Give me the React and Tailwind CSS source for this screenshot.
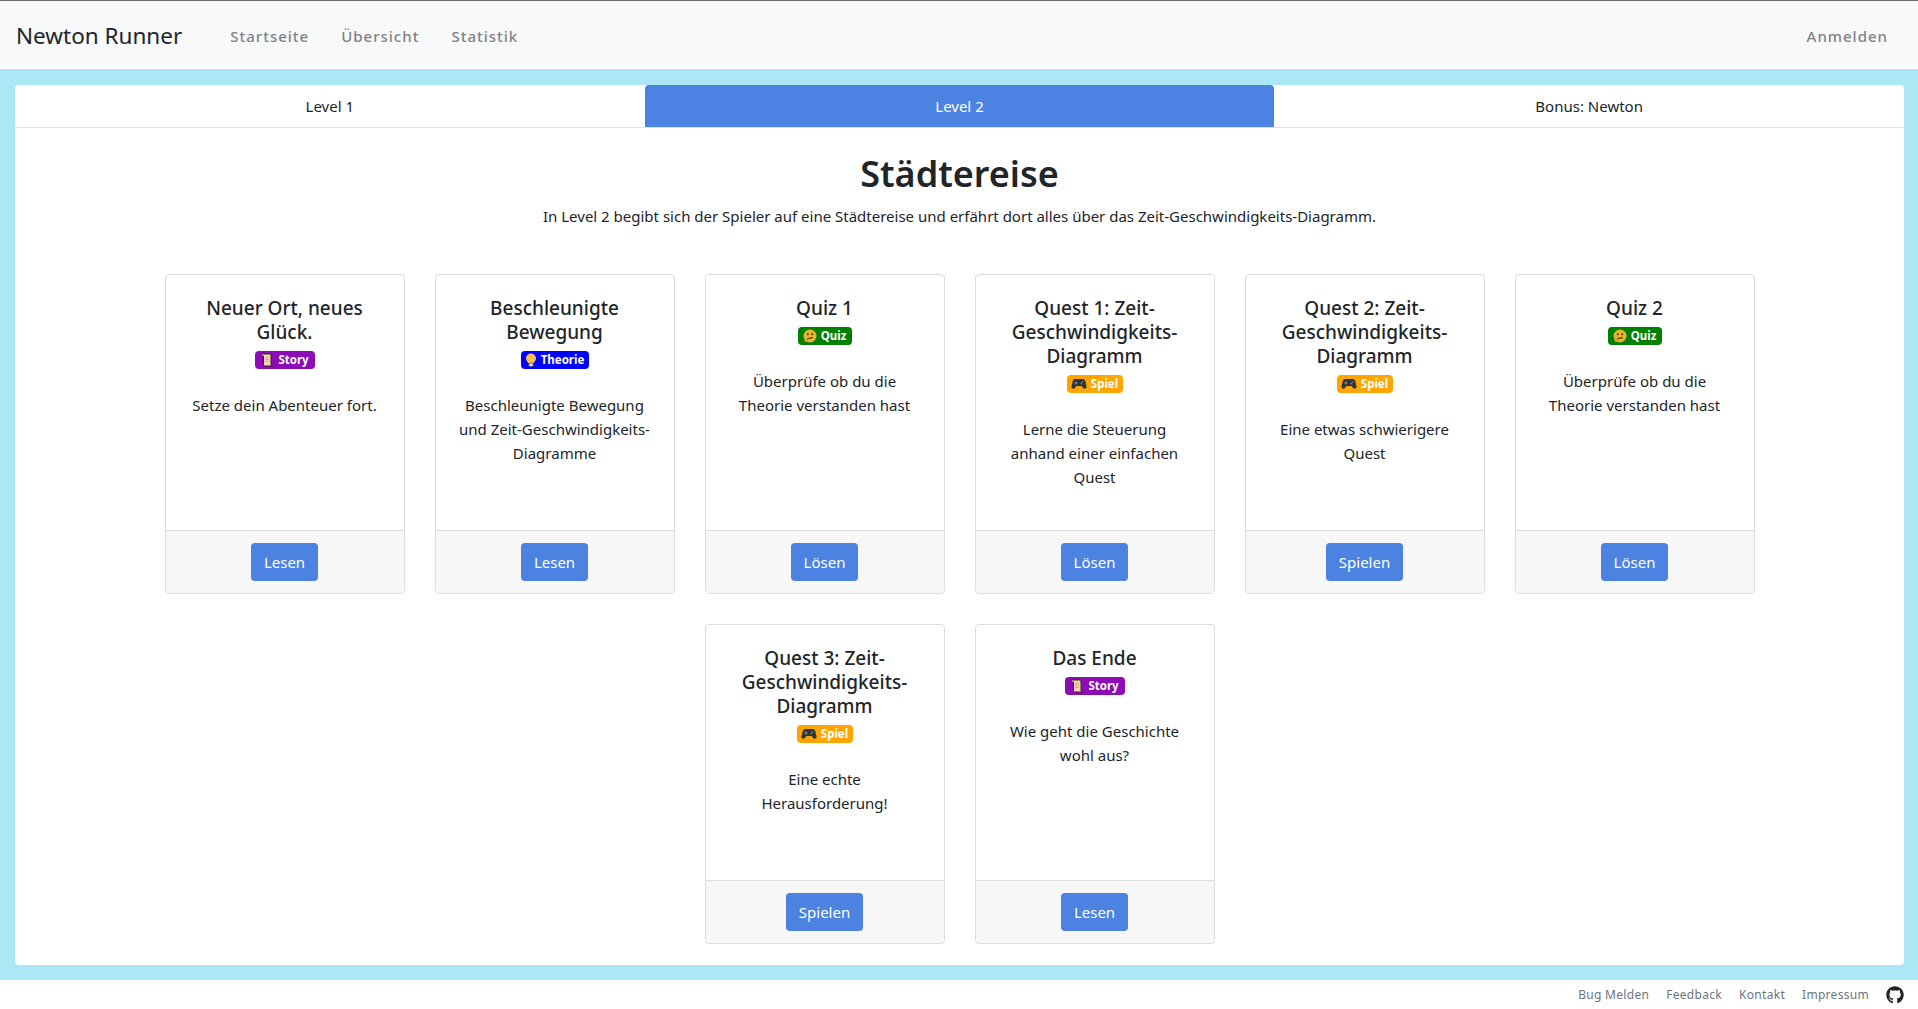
import React from 'react'
import { FaGithub } from 'react-icons/fa'

const ScrollIcon = () => (
  <svg width="14" height="14" viewBox="0 0 14 14" className="shrink-0">
    <path d="M2 1h9v10.5c0 1 .6 1.5 1.5 1.5H5c-1 0-1.5-.6-1.5-1.5V3H1.2C1 2 1.2 1 2 1z" fill="#f3d2b5" stroke="#3a2418" strokeWidth="1" />
    <path d="M5 4.5h4M5 6.5h4M5 8.5h4" stroke="#d8a98a" strokeWidth="1" />
  </svg>
)

const BulbIcon = () => (
  <svg width="12" height="14" viewBox="0 0 12 14" className="shrink-0">
    <path d="M6 .5a5 5 0 0 1 5 5c0 2-1.500 3-2.200 4.500H3.200C2.500 8.500 1 7.500 1 5.500a5 5 0 0 1 5-5z" fill="#fbc04f" />
    <rect x="3.800" y="10" width="4.400" height="3.500" rx="1" fill="#d9d9d9" stroke="#444" strokeWidth=".6" />
  </svg>
)

const ThinkIcon = () => (
  <svg width="14" height="14" viewBox="0 0 14 14" className="shrink-0">
    <circle cx="7" cy="7" r="6.500" fill="#e8b52e" />
    <circle cx="4.800" cy="5.300" r="1" fill="#4a3410" />
    <circle cx="9.200" cy="5.300" r="1" fill="#4a3410" />
    <path d="M4.500 9.800 9.500 8.600" stroke="#4a3410" strokeWidth="1.100" strokeLinecap="round" />
    <path d="M1 10.500c1.500-.8 3.500-.6 4 .8.300 1-1 2.200-2 2-1-.4-1.600-1.500-2-2.800z" fill="#d79a1f" />
  </svg>
)

const PadIcon = () => (
  <svg width="16" height="12" viewBox="0 0 16 12" className="shrink-0">
    <path d="M4.500 1h7c1.800 0 2.600 1.200 3 3l1 4.500c.3 1.800-1.800 3-3 1.700L10.500 8h-5L3.500 10.200c-1.200 1.300-3.300.1-3-1.700l1-4.500c.4-1.800 1.200-3 3-3z" fill="#2f3438" />
    <path d="M3.500 5h3M5 3.500v3" stroke="#8a9094" strokeWidth="1" />
    <circle cx="11.500" cy="4" r=".8" fill="#8a9094" />
    <circle cx="10.200" cy="5.600" r=".8" fill="#8a9094" />
  </svg>
)

const badges = {
  story: { label: 'Story', icon: ScrollIcon, className: 'bg-[#8e0bb8] w-[60px]' },
  theorie: { label: 'Theorie', icon: BulbIcon, className: 'bg-[#0000ff] w-[68px]' },
  quiz: { label: 'Quiz', icon: ThinkIcon, className: 'bg-[#008000] w-[54px]' },
  spiel: { label: 'Spiel', icon: PadIcon, className: 'bg-[#ffa500] w-[56px]' },
}

const cards = [
  { title: 'Neuer Ort, neues Glück.', badge: 'story', text: 'Setze dein Abenteuer fort.', action: 'Lesen' },
  { title: 'Beschleunigte Bewegung', badge: 'theorie', text: 'Beschleunigte Bewegung und Zeit-Geschwindigkeits-Diagramme', action: 'Lesen' },
  { title: 'Quiz 1', badge: 'quiz', text: 'Überprüfe ob du die Theorie verstanden hast', action: 'Lösen' },
  { title: 'Quest 1: Zeit-Geschwindigkeits-Diagramm', badge: 'spiel', text: 'Lerne die Steuerung anhand einer einfachen Quest', action: 'Lösen' },
  { title: 'Quest 2: Zeit-Geschwindigkeits-Diagramm', badge: 'spiel', text: 'Eine etwas schwierigere Quest', action: 'Spielen' },
  { title: 'Quiz 2', badge: 'quiz', text: 'Überprüfe ob du die Theorie verstanden hast', action: 'Lösen' },
  { title: 'Quest 3: Zeit-Geschwindigkeits-Diagramm', badge: 'spiel', text: 'Eine echte Herausforderung!', action: 'Spielen' },
  { title: 'Das Ende', badge: 'story', text: 'Wie geht die Geschichte wohl aus?', action: 'Lesen' },
]

const Card = ({ card }) => {
  const badge = badges[card.badge]
  const Icon = badge.icon
  return (
    <div className="w-[240px] mx-[15px] flex flex-col border border-[#dcdcdc] rounded-[4px] bg-white text-center">
      <div className="h-[255px] px-[20px] pt-[21px]">
        <h5 className="text-[19px] leading-[24px] font-medium mb-[7px]">{card.title}</h5>
        <div className={`${badge.className} mx-auto h-[18px] rounded-[4px] flex items-center justify-center gap-[4px] text-white text-[11.5px] font-bold`}>
          <Icon />
          <span>{badge.label}</span>
        </div>
        <p className="mt-[24px] text-[15px] leading-[24px]">{card.text}</p>
      </div>
      <div className="border-t border-[#dcdcdc] bg-[#f7f7f7] rounded-b-[4px] py-[12px] flex justify-center">
        <button className="h-[38px] px-[13px] rounded-[4px] bg-[#4c82e2] text-white text-[15px]">{card.action}</button>
      </div>
    </div>
  )
}

const App = () => {
  return (
    <div className="h-[1009px] flex flex-col overflow-hidden bg-white text-[#212529] font-['Noto_Sans','Open_Sans',sans-serif]">
      <nav className="h-[69px] shrink-0 border-t border-[#6f6f73] bg-[#f8f9fa] flex items-center pt-[2px] pl-[16px] pr-[30px]">
        <span className="text-[22.5px] mr-[48px]">Newton Runner</span>
        <div className="flex gap-[32px] text-[15px] font-medium tracking-[1px] text-[#808284]">
          <a>Startseite</a>
          <a>Übersicht</a>
          <a>Statistik</a>
        </div>
        <a className="ml-auto text-[15px] font-medium tracking-[1px] text-[#808284]">Anmelden</a>
      </nav>

      <main className="flex-1 min-h-0 bg-[#ace7f6] pl-[15px] pr-[14px] pt-[16px] pb-[15px]">
        <div className="h-full bg-white rounded-[4px]">
          <div className="grid grid-cols-3 h-[43px] border-b border-[#dee2e6] text-[15px] text-center leading-[42px]">
            <div>Level 1</div>
            <div className="bg-[#4c82e2] text-white rounded-t-[4px]">Level 2</div>
            <div>Bonus: Newton</div>
          </div>
          <div className="pt-[22px]">
            <h1 className="text-[36px] leading-[48px] font-semibold text-center">Städtereise</h1>
            <p className="text-[15px] leading-[24px] text-center mt-[6px] mb-[46px]">
              In Level 2 begibt sich der Spieler auf eine Städtereise und erfährt dort alles über das Zeit-Geschwindigkeits-Diagramm.
            </p>
            <div className="w-[1620px] mx-auto flex flex-wrap justify-center gap-y-[30px]">
              {cards.map((card, index) => (
                <Card key={index} card={card} />
              ))}
            </div>
          </div>
        </div>
      </main>

      <footer className="h-[29px] shrink-0 flex items-center justify-end gap-[17px] pt-[1px] pr-[14px] text-[12px] tracking-[.3px] text-[#6c757d]">
        <a>Bug Melden</a>
        <a>Feedback</a>
        <a>Kontakt</a>
        <a>Impressum</a>
        <FaGithub className="text-[18px] text-[#212529]" />
      </footer>
    </div>
  )
}

export default App
